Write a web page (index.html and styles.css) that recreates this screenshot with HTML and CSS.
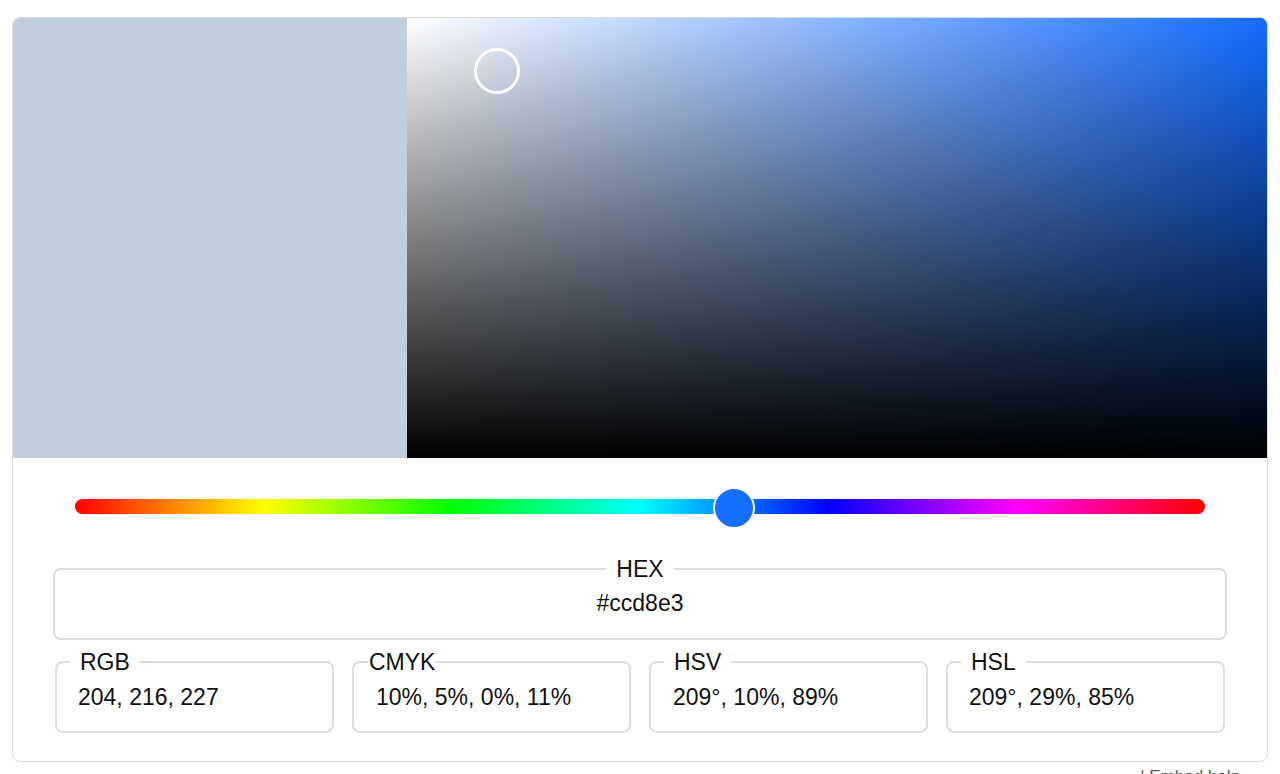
FILE: index.html
```html
<!DOCTYPE html>
<html lang="en">
<head>
<meta charset="utf-8">
<title>Color Picker</title>
<link rel="stylesheet" href="styles.css">
</head>
<body>
<div class="card">
  <div class="top">
    <div class="swatch"></div>
    <div class="sv">
      <div class="sv-cursor"></div>
    </div>
  </div>
  <div class="controls">
    <div class="hue">
      <div class="hue-thumb" style="left: calc(58.3% - 21px);"></div>
    </div>
    <fieldset class="field field-hex">
      <legend class="legend legend-center">HEX</legend>
      <div class="value">#ccd8e3</div>
    </fieldset>
    <div class="row">
      <fieldset class="field">
        <legend class="legend">RGB</legend>
        <div class="value">204, 216, 227</div>
      </fieldset>
      <fieldset class="field">
        <legend class="legend legend-tight">CMYK</legend>
        <div class="value value-indent">10%, 5%, 0%, 11%</div>
      </fieldset>
      <fieldset class="field">
        <legend class="legend">HSV</legend>
        <div class="value value-indent">209°, 10%, 89%</div>
      </fieldset>
      <fieldset class="field">
        <legend class="legend">HSL</legend>
        <div class="value">209°, 29%, 85%</div>
      </fieldset>
    </div>
  </div>
</div>
<div class="footer">| Embed help</div>
</body>
</html>
```

FILE: styles.css
```css
body {
  margin: 0;
  padding: 17px 12px 0;
  background: #fff;
  font-family: "Liberation Sans", Arial, sans-serif;
  color: #111;
}

.card {
  width: 1256px;
  box-sizing: border-box;
  border: 1px solid #d9d9d9;
  border-radius: 8px;
  overflow: hidden;
  background: #fff;
}

.top {
  display: flex;
  height: 440px;
}

.swatch {
  width: 394px;
  background: #c1cfdc;
}

.sv {
  flex: 1;
  position: relative;
  background:
    linear-gradient(to top, #000, rgba(0, 0, 0, 0)),
    linear-gradient(to right, #fff, rgba(255, 255, 255, 0)),
    #156dff;
}

.sv-cursor {
  position: absolute;
  left: 67px;
  top: 30px;
  width: 46px;
  height: 46px;
  box-sizing: border-box;
  border: 3px solid #fff;
  border-radius: 50%;
}

.controls {
  padding: 41px 40px 28px;
}

.hue {
  position: relative;
  margin: 0 22px;
  height: 15px;
  border-radius: 8px;
  background: linear-gradient(to right,
    #ff0000 0%,
    #ffff00 16.7%,
    #00ff00 33.3%,
    #00ffff 50%,
    #0000ff 66.7%,
    #ff00ff 83.3%,
    #ff0000 100%);
}

.hue-thumb {
  position: absolute;
  top: -12px;
  width: 42px;
  height: 42px;
  box-sizing: border-box;
  border: 2px solid #fff;
  border-radius: 50%;
  background: #1670ff;
}

.field {
  margin: 0;
  min-width: 0;
  border: 2px solid #dddddd;
  border-radius: 8px;
  padding: 11px 21px 21px;
}

.field-hex {
  margin-top: 42px;
  padding: 8px 20px 22px;
  text-align: center;
}

.legend {
  font-size: 23px;
  line-height: 22px;
  padding: 0 10px;
  margin-left: -8px;
  color: #111;
}

.field-hex .legend {
  line-height: 26px;
}

.legend-center {
  margin: 0 auto;
}

.legend-tight {
  padding: 0;
  margin-left: -6px;
}

.value {
  font-size: 23px;
  line-height: 26px;
  white-space: nowrap;
}

.value-indent {
  padding-left: 1px;
}

.row {
  display: grid;
  grid-template-columns: repeat(4, 1fr);
  gap: 18px;
  margin-top: 11px;
  padding: 0 2px;
}

.footer {
  width: 1256px;
  text-align: right;
  padding-right: 28px;
  box-sizing: border-box;
  margin-top: 5px;
  font-size: 17px;
  line-height: 20px;
  color: #555;
}
```
